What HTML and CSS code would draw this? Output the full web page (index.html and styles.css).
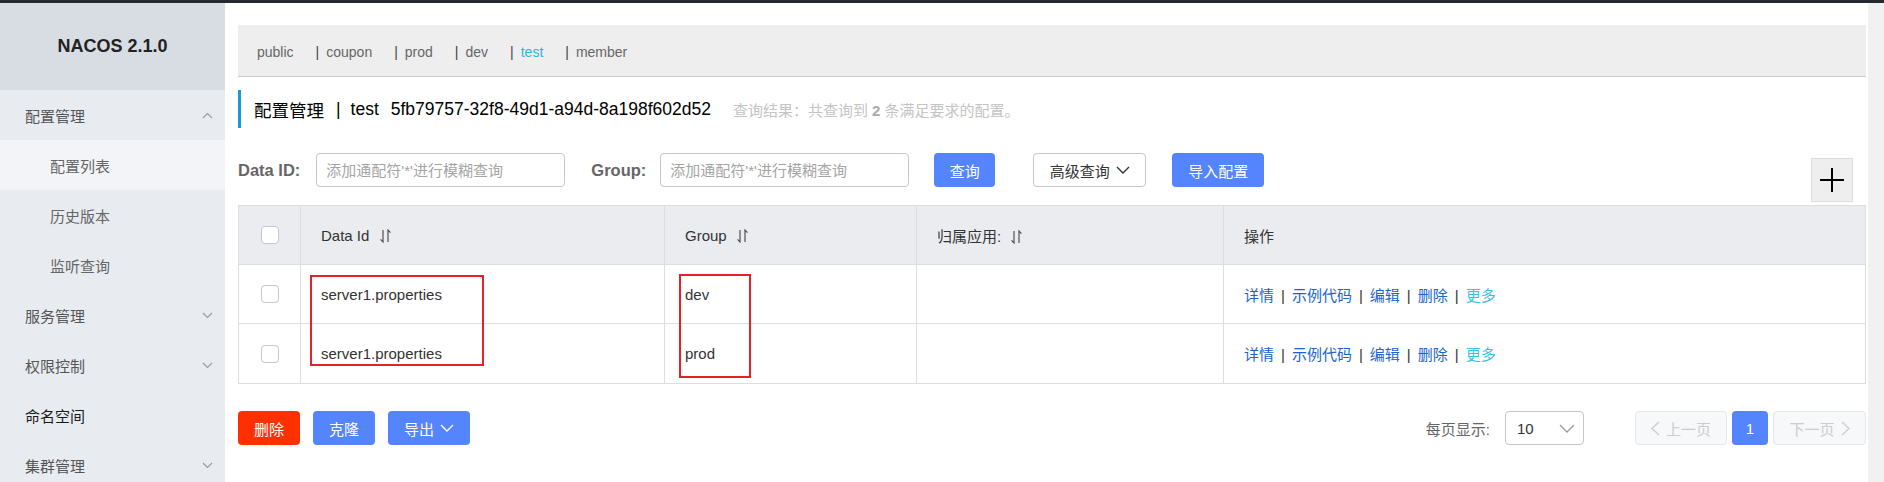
FILE: index.html
```html
<!DOCTYPE html>
<html lang="zh-CN">
<head>
    <meta charset="UTF-8">
    <title>Nacos</title>
    <link rel="stylesheet" href="styles.css">
</head>
<body>
    <div class="topbar"></div>
    <div class="layout">
        <aside class="sidebar">
            <div class="logo">NACOS 2.1.0</div>
            <div class="menu-item">
                <span>配置管理</span>
                <svg class="arrow" width="11" height="7" viewBox="0 0 11 7"><polyline points="1,6 5.5,1.5 10,6" /></svg>
            </div>
            <div class="menu-item sub active">配置列表</div>
            <div class="menu-item sub">历史版本</div>
            <div class="menu-item sub">监听查询</div>
            <div class="menu-item">
                <span>服务管理</span>
                <svg class="arrow" width="11" height="7" viewBox="0 0 11 7"><polyline points="1,1 5.5,5.5 10,1" /></svg>
            </div>
            <div class="menu-item">
                <span>权限控制</span>
                <svg class="arrow" width="11" height="7" viewBox="0 0 11 7"><polyline points="1,1 5.5,5.5 10,1" /></svg>
            </div>
            <div class="menu-item dark">命名空间</div>
            <div class="menu-item">
                <span>集群管理</span>
                <svg class="arrow" width="11" height="7" viewBox="0 0 11 7"><polyline points="1,1 5.5,5.5 10,1" /></svg>
            </div>
        </aside>

        <main class="main">
            <div class="ns-bar">
                <span class="ns-item">public</span>
                <span class="ns-item"><span class="ns-sep">|</span>coupon</span>
                <span class="ns-item"><span class="ns-sep">|</span>prod</span>
                <span class="ns-item"><span class="ns-sep">|</span>dev</span>
                <span class="ns-item current"><span class="ns-sep">|</span>test</span>
                <span class="ns-item"><span class="ns-sep">|</span>member</span>
            </div>

            <div class="title">
                <span>配置管理</span>
                <span class="title-sep">|</span>
                <span class="title-ns">test</span>
                <span>5fb79757-32f8-49d1-a94d-8a198f602d52</span>
                <span class="result">查询结果：共查询到 <b>2</b> 条满足要求的配置。</span>
            </div>

            <div class="search-row">
                <div class="search-left">
                    <label class="search-label">Data ID:</label>
                    <input class="search-input" type="text" placeholder="添加通配符'*'进行模糊查询">
                    <label class="search-label group-label">Group:</label>
                    <input class="search-input" type="text" placeholder="添加通配符'*'进行模糊查询">
                    <button class="btn btn-primary btn-query">查询</button>
                    <button class="btn btn-normal btn-adv">高级查询
                        <svg width="14" height="8" viewBox="0 0 14 8"><polyline points="1,1 7,7 13,1" /></svg>
                    </button>
                    <button class="btn btn-primary btn-import">导入配置</button>
                </div>
                <button class="plus-btn">
                    <svg width="26" height="26" viewBox="0 0 26 26"><path d="M13 1 V25 M1 13 H25" /></svg>
                </button>
            </div>

            <div class="table-wrap">
                <table class="config-table">
                    <colgroup>
                        <col style="width: 62px">
                        <col style="width: 364px">
                        <col style="width: 252px">
                        <col style="width: 307px">
                        <col>
                    </colgroup>
                    <thead>
                        <tr>
                            <th class="check-cell"><span class="checkbox"></span></th>
                            <th>Data Id <svg class="sort" width="11" height="14" viewBox="0 0 11 14"><path d="M3 1 V13 L0.6 10.4 M8 13 V1 L10.4 3.6" /></svg></th>
                            <th>Group <svg class="sort" width="11" height="14" viewBox="0 0 11 14"><path d="M3 1 V13 L0.6 10.4 M8 13 V1 L10.4 3.6" /></svg></th>
                            <th>归属应用: <svg class="sort" width="11" height="14" viewBox="0 0 11 14"><path d="M3 1 V13 L0.6 10.4 M8 13 V1 L10.4 3.6" /></svg></th>
                            <th>操作</th>
                        </tr>
                    </thead>
                    <tbody>
                        <tr>
                            <td class="check-cell"><span class="checkbox"></span></td>
                            <td>server1.properties</td>
                            <td>dev</td>
                            <td></td>
                            <td class="ops">
                                <a href="#">详情</a><span class="op-sep">|</span><a href="#">示例代码</a><span class="op-sep">|</span><a href="#">编辑</a><span class="op-sep">|</span><a href="#">删除</a><span class="op-sep">|</span><a href="#" class="more">更多</a>
                            </td>
                        </tr>
                        <tr class="row-last">
                            <td class="check-cell"><span class="checkbox"></span></td>
                            <td>server1.properties</td>
                            <td>prod</td>
                            <td></td>
                            <td class="ops">
                                <a href="#">详情</a><span class="op-sep">|</span><a href="#">示例代码</a><span class="op-sep">|</span><a href="#">编辑</a><span class="op-sep">|</span><a href="#">删除</a><span class="op-sep">|</span><a href="#" class="more">更多</a>
                            </td>
                        </tr>
                    </tbody>
                </table>
                <!-- annotation boxes drawn over the screenshot -->
                <div class="mark mark-id"></div>
                <div class="mark mark-group"></div>
            </div>

            <div class="footer-row">
                <div class="footer-left">
                    <button class="btn btn-danger btn-small">删除</button>
                    <button class="btn btn-primary btn-small">克隆</button>
                    <button class="btn btn-primary btn-export">导出
                        <svg width="14" height="8" viewBox="0 0 14 8"><polyline points="1,1 7,7 13,1" /></svg>
                    </button>
                </div>
                <div class="pager">
                    <span class="page-label">每页显示:</span>
                    <div class="page-size">
                        <span>10</span>
                        <svg width="16" height="9" viewBox="0 0 16 9"><polyline points="1,1 8,8 15,1" /></svg>
                    </div>
                    <button class="page-btn page-prev">
                        <svg width="9" height="15" viewBox="0 0 9 15"><polyline points="8,1 1,7.5 8,14" /></svg>
                        上一页
                    </button>
                    <button class="page-num">1</button>
                    <button class="page-btn page-next">
                        下一页
                        <svg width="9" height="15" viewBox="0 0 9 15"><polyline points="1,1 8,7.5 1,14" /></svg>
                    </button>
                </div>
            </div>
        </main>

        <div class="scroll-strip"></div>
    </div>
</body>
</html>
```

FILE: styles.css
```css
* {
    box-sizing: border-box;
    margin: 0;
    padding: 0;
}

body {
    font-family: "Liberation Sans", "Noto Sans CJK SC", sans-serif;
    background: #fff;
    color: #333;
    height: 482px;
    overflow: hidden;
}

.topbar {
    height: 3px;
    background: #262a30;
}

.layout {
    display: flex;
    height: 479px;
}

/* sidebar */
.sidebar {
    width: 225px;
    flex-shrink: 0;
    background: #e8ebf0;
    overflow: hidden;
}

.logo {
    height: 87px;
    background: #d8dde3;
    display: flex;
    align-items: center;
    justify-content: center;
    font-size: 18px;
    font-weight: bold;
    color: #222;
}

.menu-item {
    height: 50px;
    flex-shrink: 0;
    display: flex;
    align-items: center;
    justify-content: space-between;
    padding: 0 12px 0 25px;
    font-size: 15px;
    color: #555;
}

.menu-item.sub {
    padding-left: 50px;
    color: #666;
}

.menu-item.active {
    background: #f2f4f7;
}

.menu-item.dark {
    color: #1a1a1a;
}

.arrow polyline {
    fill: none;
    stroke: #999;
    stroke-width: 1.1;
}

/* main area */
.main {
    flex: 1;
    padding: 22px 2px 0 13px;
    min-width: 0;
}

.scroll-strip {
    width: 16px;
    flex-shrink: 0;
    background: #f1f1f1;
}

.ns-bar {
    height: 52px;
    background: #eee;
    border-bottom: 1px solid #ccc;
    display: flex;
    align-items: center;
    padding: 3px 0 0 19px;
    font-size: 14px;
    color: #666;
}

.ns-item {
    margin-right: 22px;
}

.ns-sep {
    color: #444;
    margin-right: 7px;
}

.ns-item.current {
    color: #2ab7e2;
}

.title {
    margin-top: 13px;
    height: 38px;
    border-left: 3px solid #1a9bd6;
    padding-left: 13px;
    display: flex;
    align-items: center;
    font-size: 17.5px;
    color: #000;
}

.title-sep {
    margin: 0 10px 0 12px;
}

.title-ns {
    margin-right: 12px;
}

.result {
    margin-left: 22px;
    font-size: 15px;
    color: #c4c4c4;
}

.result b {
    color: #aaa;
}

/* search */
.search-row {
    margin-top: 25px;
    display: flex;
    justify-content: space-between;
    align-items: flex-start;
}

.search-left {
    display: flex;
    align-items: center;
}

.search-label {
    font-size: 16.5px;
    font-weight: bold;
    color: #666;
    margin-right: 16px;
}

.group-label {
    margin-left: 26px;
    margin-right: 14px;
}

.search-input {
    width: 249px;
    height: 34px;
    border: 1px solid #c4c6cf;
    border-radius: 4px;
    padding: 0 9px;
    font-family: inherit;
    font-size: 15px;
    color: #333;
    outline: none;
}

.search-input::placeholder {
    color: #a5a5a5;
}

.btn {
    height: 34px;
    border-radius: 4px;
    border: none;
    font-family: inherit;
    font-size: 15px;
    cursor: pointer;
    display: flex;
    align-items: center;
    justify-content: center;
    gap: 6px;
}

.btn svg polyline {
    fill: none;
    stroke-width: 1.4;
}

.btn-primary {
    background: #5584ff;
    color: #fff;
}

.btn-primary svg polyline {
    stroke: #fff;
}

.btn-danger {
    background: #ff3000;
    color: #fff;
}

.btn-normal {
    background: #fff;
    color: #333;
    border: 1px solid #c4c6cf;
}

.btn-normal svg polyline {
    stroke: #333;
}

.btn-query {
    width: 61px;
    margin-left: 25px;
}

.btn-adv {
    width: 113px;
    margin-left: 38px;
}

.btn-import {
    width: 92px;
    margin-left: 26px;
}

.plus-btn {
    width: 42px;
    height: 44px;
    margin-top: 5px;
    margin-right: 13px;
    background: #eee;
    border: 1px solid #ddd;
    display: flex;
    align-items: center;
    justify-content: center;
}

.plus-btn path {
    stroke: #000;
    stroke-width: 2;
}

/* table */
.table-wrap {
    position: relative;
    margin-top: 3px;
}

.config-table {
    width: 100%;
    table-layout: fixed;
    border-collapse: collapse;
    font-size: 15px;
    color: #333;
}

.config-table th,
.config-table td {
    border: 1px solid #dcdee3;
    text-align: left;
    padding: 0 20px;
    font-weight: normal;
}

.config-table th {
    height: 59px;
    background: #ebecf0;
    font-size: 15px;
}

.config-table td {
    height: 59px;
}

.config-table .row-last td {
    height: 60px;
}

.config-table .check-cell {
    padding: 0 0 0 22px;
}

.checkbox {
    display: block;
    width: 18px;
    height: 18px;
    border: 1px solid #c4c6cf;
    border-radius: 4px;
    background: #fff;
}

.sort {
    margin-left: 6px;
    vertical-align: -2px;
}

.sort path {
    fill: none;
    stroke: #444;
    stroke-width: 1.1;
}

.ops {
    font-size: 15px;
}

.ops a {
    color: #1a63d2;
    text-decoration: none;
}

.ops a.more {
    color: #33c4e6;
}

.op-sep {
    margin: 0 7px;
    color: #333;
}

.mark {
    position: absolute;
    border: 2px solid #e8202a;
}

.mark-id {
    left: 72px;
    top: 70px;
    width: 174px;
    height: 91px;
}

.mark-group {
    left: 441px;
    top: 69px;
    width: 72px;
    height: 104px;
}

/* footer */
.footer-row {
    margin-top: 27px;
    display: flex;
    justify-content: space-between;
    align-items: center;
}

.footer-left {
    display: flex;
    gap: 13px;
}

.btn-small {
    width: 62px;
}

.btn-export {
    width: 82px;
}

.pager {
    display: flex;
    align-items: center;
}

.page-label {
    font-size: 15px;
    color: #666;
    margin-right: 15px;
}

.page-size {
    width: 79px;
    height: 34px;
    border: 1px solid #c4c6cf;
    border-radius: 4px;
    display: flex;
    align-items: center;
    justify-content: space-between;
    padding: 0 8px 0 11px;
    font-size: 15px;
    color: #333;
}

.page-size polyline,
.page-btn polyline {
    fill: none;
    stroke: #999;
    stroke-width: 1.3;
}

.page-btn polyline {
    stroke: #ccc;
}

.page-btn {
    height: 34px;
    background: #f7f8fa;
    border: 1px solid #e6e7eb;
    border-radius: 4px;
    color: #ccc;
    font-family: inherit;
    font-size: 15px;
    display: flex;
    align-items: center;
    justify-content: center;
    gap: 6px;
}

.page-prev {
    width: 92px;
    margin-left: 51px;
}

.page-next {
    width: 93px;
}

.page-num {
    width: 36px;
    height: 34px;
    margin: 0 5px;
    background: #5584ff;
    color: #fff;
    border: none;
    border-radius: 4px;
    font-family: inherit;
    font-size: 15px;
}
```
